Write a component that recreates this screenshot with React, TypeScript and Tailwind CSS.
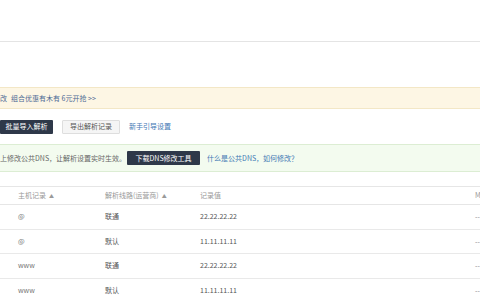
import React from "react";

const rows = [
  { host: "@", line: "联通", value: "22.22.22.22" },
  { host: "@", line: "默认", value: "11.11.11.11" },
  { host: "www", line: "联通", value: "22.22.22.22" },
  { host: "www", line: "默认", value: "11.11.11.11" },
];

export default function App() {
  return (
    <div
      className="w-[480px] h-[300px] overflow-hidden bg-white text-[7px] leading-none text-[#666]"
      style={{ fontFamily: '"Noto Sans CJK SC", "Noto Sans", sans-serif' }}
    >
      {/* Top bar */}
      <div className="h-[42px] border-b border-[#e4e4e4]" />
      <div className="h-[45px]" />

      {/* Promo banner */}
      <div className="h-[22px] flex items-center bg-[#fdf6e4] border-y border-[#f3e7c6] whitespace-nowrap">
        <span className="text-[#4d6a94]">改</span>
        <span className="ml-[4px] text-[#4d6a94]">组合优惠有木有 6元开抢 &gt;&gt;</span>
      </div>

      {/* Actions */}
      <div className="h-[35px] flex items-center gap-[9px]">
        <button className="h-[14px] w-[53px] bg-[#2e3849] text-white rounded-[1px] flex items-center justify-center">
          批量导入解析
        </button>
        <button className="h-[14px] w-[58px] bg-[#f5f5f5] border border-[#dedede] text-[#555] rounded-[1px] flex items-center justify-center">
          导出解析记录
        </button>
        <a className="text-[#3f78b4]">新手引导设置</a>
      </div>

      {/* DNS tip */}
      <div className="h-[28px] flex items-center bg-[#f3fbef] border-y border-[#dcedd3] whitespace-nowrap">
        <span className="text-[#666]">上修改公共DNS，让解析设置实时生效。</span>
        <button className="ml-[1px] h-[14px] w-[73px] bg-[#2e3849] text-white rounded-[1px] flex items-center justify-center">
          下载DNS修改工具
        </button>
        <a className="ml-[7px] text-[#3f78b4]">什么是公共DNS，如何修改？</a>
      </div>

      <div className="h-[14px]" />

      {/* Records table */}
      <div className="border-t border-[#e6e6e6] whitespace-nowrap overflow-hidden">
        <div className="h-[18px] grid grid-cols-[105px_95px_275px_1fr] items-center border-b border-[#e6e6e6] text-[#999]">
          <span className="pl-[18px] flex items-center gap-[3px]">
            主机记录 <span className="text-[5px]">▲</span>
          </span>
          <span className="flex items-center gap-[3px]">
            解析线路(运营商) <span className="text-[5px]">▲</span>
          </span>
          <span>记录值</span>
          <span>MX优先级</span>
        </div>
        {rows.map((r, i) => (
          <div
            key={i}
            className="h-[24.5px] grid grid-cols-[105px_95px_275px_1fr] items-center border-b border-[#e9e9e9]"
          >
            <span className="pl-[18px] text-[#777]">{r.host}</span>
            <span className="text-[#555]">{r.line}</span>
            <span className="text-[#555]">{r.value}</span>
            <span className="text-[#888]">--</span>
          </div>
        ))}
      </div>
    </div>
  );
}
